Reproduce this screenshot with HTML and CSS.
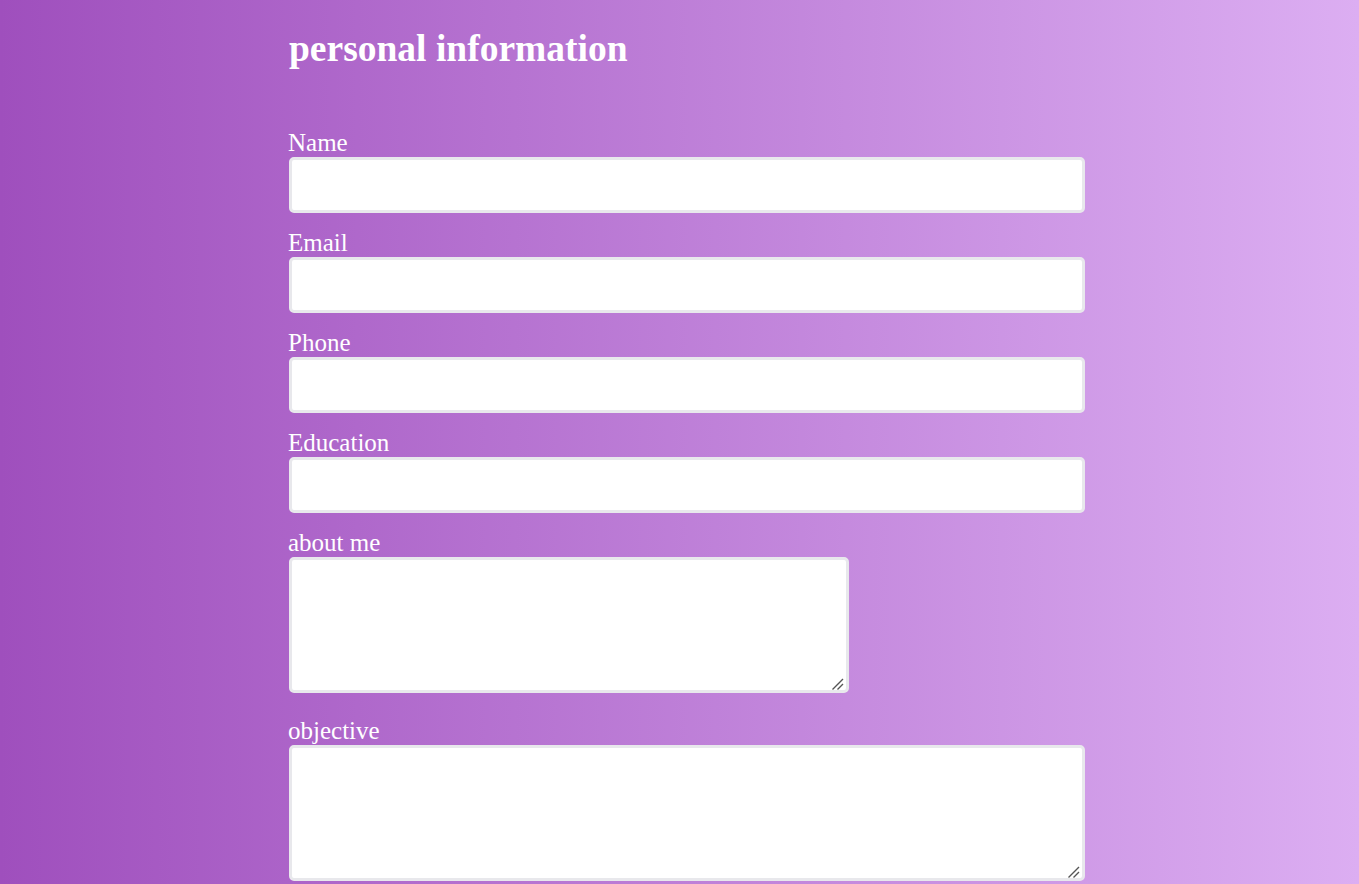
FILE: index.html
```html
<!DOCTYPE html>
<html>
<head>
<meta charset="utf-8">
<title>personal information</title>
<link rel="stylesheet" href="styles.css">
</head>
<body>
<div class="page">
  <h1 class="title">personal information</h1>
  <form class="form">
    <label class="label" for="name">Name</label>
    <input class="field" id="name" type="text">
    <label class="label" for="email">Email</label>
    <input class="field" id="email" type="email">
    <label class="label" for="phone">Phone</label>
    <input class="field" id="phone" type="tel">
    <label class="label" for="edu">Education</label>
    <input class="field" id="edu" type="text">
    <label class="label" for="about">about me</label>
    <div class="area-wrap area-small">
      <textarea class="area" id="about"></textarea>
      <svg class="grip" width="12" height="12" viewBox="0 0 12 12"><path d="M0.5 11.5 L11 1 M5.5 11.5 L11 6" stroke="#555" stroke-width="1.4" fill="none"/></svg>
    </div>
    <label class="label" for="obj">objective</label>
    <div class="area-wrap area-wide">
      <textarea class="area" id="obj"></textarea>
      <svg class="grip" width="12" height="12" viewBox="0 0 12 12"><path d="M0.5 11.5 L11 1 M5.5 11.5 L11 6" stroke="#555" stroke-width="1.4" fill="none"/></svg>
    </div>
  </form>
</div>
</body>
</html>
```
FILE: styles.css
```css
html, body {
  margin: 0;
  padding: 0;
}
body {
  height: 884px;
  background: linear-gradient(to right, #9f4fbd, #dcaef2);
  font-family: "Liberation Serif", "Times New Roman", serif;
  color: #ffffff;
  overflow: hidden;
}
.page {
  width: 796px;
  margin-left: 289px;
  padding-top: 0.1px;
}
.title {
  font-size: 37.5px;
  font-weight: bold;
  line-height: normal;
  margin: 27px 0 59px 0;
}
.form {
  display: flex;
  flex-direction: column;
  align-items: flex-start;
}
.label {
  font-size: 25px;
  line-height: 28px;
  height: 28px;
  margin-left: -1px;
}
.field {
  box-sizing: border-box;
  width: 796px;
  height: 56px;
  border: 3px solid #e8e8ec;
  border-radius: 5px;
  background: #ffffff;
  margin: 0 0 16px 0;
  padding: 0 8px;
  font-size: 18px;
  outline: none;
}
.area-wrap {
  position: relative;
  height: 136px;
  margin-bottom: 24px;
}
.area-small {
  width: 560px;
}
.area-wide {
  width: 796px;
}
.area {
  display: block;
  box-sizing: border-box;
  width: 100%;
  height: 136px;
  margin: 0;
  border: 3px solid #e8e8ec;
  border-radius: 5px;
  background: #ffffff;
  resize: none;
  outline: none;
  font-size: 16px;
}
.grip {
  position: absolute;
  right: 5px;
  bottom: 3px;
}
```
